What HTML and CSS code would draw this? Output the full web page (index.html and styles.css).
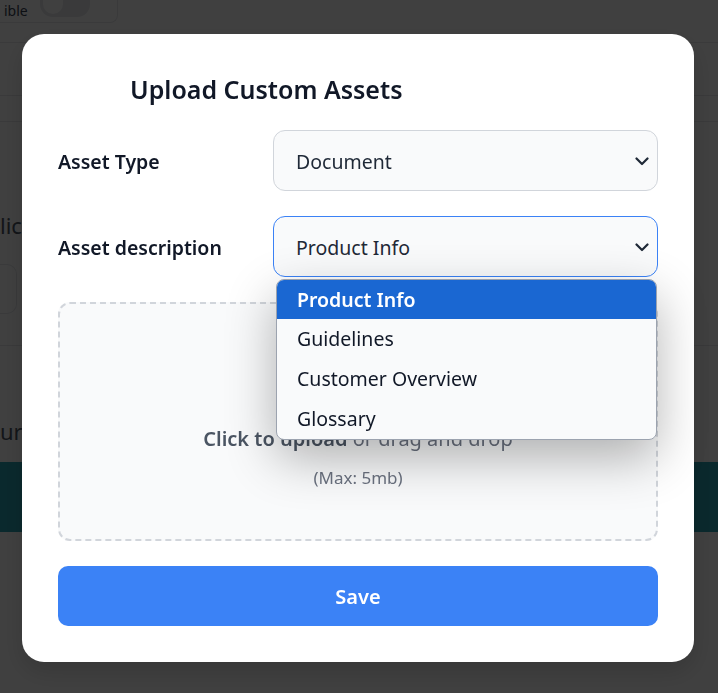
FILE: index.html
```html
<!DOCTYPE html>
<html lang="en">
<head>
    <meta charset="UTF-8">
    <meta name="viewport" content="width=device-width, initial-scale=1.0">
    <title>Upload Custom Assets</title>
    <link rel="stylesheet" href="styles.css">
</head>
<body>
    <!-- page behind the modal -->
    <div class="page">
        <div class="page-head">
            <div class="visible-card">
                <span class="visible-label">ible</span>
                <span class="switch"><span class="switch-knob"></span></span>
            </div>
        </div>
        <div class="page-bar"></div>
        <div class="page-tabs"></div>
        <div class="page-section">
            <p class="page-text">lic</p>
            <div class="page-input"></div>
        </div>
        <div class="page-section page-section-last">
            <p class="page-text">ur</p>
            <div class="page-banner"></div>
        </div>
    </div>

    <div class="backdrop">
        <div class="modal">
            <h2 class="modal-title">Upload Custom Assets</h2>

            <div class="field">
                <label class="field-label">Asset Type</label>
                <div class="select">
                    <span>Document</span>
                    <svg class="chevron" width="14" height="9" viewBox="0 0 14 9"><path d="M1.5 1.5 L7 7 L12.5 1.5" fill="none" stroke="#1f2937" stroke-width="2.2" stroke-linecap="round" stroke-linejoin="round"/></svg>
                </div>
            </div>

            <div class="field">
                <label class="field-label">Asset description</label>
                <div class="select select-open">
                    <span>Product Info</span>
                    <svg class="chevron" width="14" height="9" viewBox="0 0 14 9"><path d="M1.5 1.5 L7 7 L12.5 1.5" fill="none" stroke="#1f2937" stroke-width="2.2" stroke-linecap="round" stroke-linejoin="round"/></svg>
                    <ul class="options">
                        <li class="option option-active">Product Info</li>
                        <li class="option">Guidelines</li>
                        <li class="option">Customer Overview</li>
                        <li class="option">Glossary</li>
                    </ul>
                </div>
            </div>

            <div class="dropzone">
                <p class="drop-main"><b>Click to upload</b> or drag and drop</p>
                <p class="drop-hint">(Max: 5mb)</p>
            </div>

            <button class="save-button">Save</button>
        </div>
    </div>
</body>
</html>
```

FILE: styles.css
```css
body {
    margin: 0;
    font-family: 'Noto Sans', 'Open Sans', sans-serif;
    background: #fff;
    color: #111827;
    height: 693px;
    overflow: hidden;
}

/* Page behind the overlay */
.page {
    width: 718px;
}
.page-head {
    display: flex;
    height: 43px;
    border-bottom: 1px solid #e5e7eb;
    box-sizing: border-box;
}
.visible-card {
    display: flex;
    align-items: flex-start;
    gap: 12px;
    width: 118px;
    height: 23px;
    border-right: 1px solid #e5e7eb;
    border-bottom: 1px solid #e5e7eb;
    border-bottom-right-radius: 8px;
    box-sizing: border-box;
}
.visible-label {
    font-size: 14px;
    line-height: 16px;
    color: #374151;
    padding: 3px 0 0 4px;
}
.switch {
    width: 50px;
    height: 17px;
    border-bottom-left-radius: 13px;
    border-bottom-right-radius: 13px;
    background: #e5e7eb;
}
.switch-knob {
    display: block;
    width: 20px;
    height: 14px;
    border-bottom-left-radius: 10px;
    border-bottom-right-radius: 10px;
    margin-left: 3px;
    background: #fff;
}
.page-bar {
    height: 53px;
    border-bottom: 1px solid #e5e7eb;
    box-sizing: border-box;
}
.page-tabs {
    height: 26px;
    border-bottom: 1px solid #e5e7eb;
    box-sizing: border-box;
}
.page-section {
    display: flow-root;
    padding-top: 88px;
    height: 224px;
    border-bottom: 1px solid #e5e7eb;
    box-sizing: border-box;
}
.page-text {
    margin: 0;
    font-size: 22px;
    line-height: 30px;
    color: #4b5563;
}
.page-input {
    margin-top: 24px;
    width: 16px;
    height: 48px;
    border: 1px solid #e5e7eb;
    border-left: none;
    border-radius: 0 10px 10px 0;
}
.page-section-last {
    border-bottom: none;
    padding-top: 70px;
}
.page-banner {
    margin-top: 16px;
    height: 70px;
    background: #2aa3b3;
}

/* Overlay + modal */
.backdrop {
    position: fixed;
    inset: 0;
    background: rgba(0, 0, 0, 0.75);
    display: flex;
    align-items: flex-start;
    padding: 34px 0 0 22px;
}
.modal {
    width: 672px;
    box-sizing: border-box;
    background: #fff;
    border-radius: 22px;
    padding: 39px 36px 36px;
    display: flex;
    flex-direction: column;
    gap: 25px;
    box-shadow: 0 10px 25px rgba(0, 0, 0, 0.15);
}
.modal-title {
    margin: 0 0 0 72px;
    font-size: 25px;
    line-height: 32px;
    font-weight: 600;
    color: #111827;
}
.field {
    display: grid;
    grid-template-columns: 215px 1fr;
    align-items: center;
}
.field-label {
    font-size: 19.5px;
    font-weight: 600;
    color: #111827;
    padding-top: 2px;
}
.select {
    position: relative;
    height: 61px;
    box-sizing: border-box;
    display: flex;
    align-items: center;
    justify-content: space-between;
    padding: 2px 8px 0 22px;
    background: #f9fafb;
    border: 1px solid #d1d5db;
    border-radius: 12px;
    font-size: 19.5px;
    color: #1f2937;
}
.select-open {
    border-color: #3b82f6;
}
.chevron {
    display: block;
}
.options {
    position: absolute;
    top: 62px;
    left: 2px;
    right: 0;
    margin: 0;
    padding: 0;
    list-style: none;
    background: #f9fafb;
    border: 1px solid #9ca3af;
    border-radius: 8px;
    overflow: hidden;
    box-shadow: 0 18px 50px rgba(0, 0, 0, 0.3);
    z-index: 2;
}
.option {
    height: 40px;
    line-height: 40px;
    padding-left: 20px;
    font-size: 19.5px;
    color: #111827;
}
.option-active {
    height: 39px;
    line-height: 39px;
    background: #1a67d2;
    color: #fff;
    font-weight: 600;
}
.dropzone {
    height: 239px;
    box-sizing: border-box;
    border: 2px dashed #d1d5db;
    border-radius: 12px;
    background: #f9fafb;
    display: flex;
    flex-direction: column;
    align-items: center;
    justify-content: flex-end;
    padding-bottom: 50px;
}
.drop-main {
    margin: 0;
    font-size: 20px;
    line-height: 27px;
    color: #6b7280;
}
.drop-main b {
    font-weight: 600;
    color: #4b5563;
}
.drop-hint {
    margin: 14px 0 0;
    font-size: 17px;
    line-height: 23px;
    color: #6b7280;
}
.save-button {
    height: 60px;
    border: none;
    border-radius: 10px;
    background: #3b82f6;
    color: #fff;
    font-family: inherit;
    font-size: 20px;
    font-weight: 600;
    cursor: pointer;
}
```
